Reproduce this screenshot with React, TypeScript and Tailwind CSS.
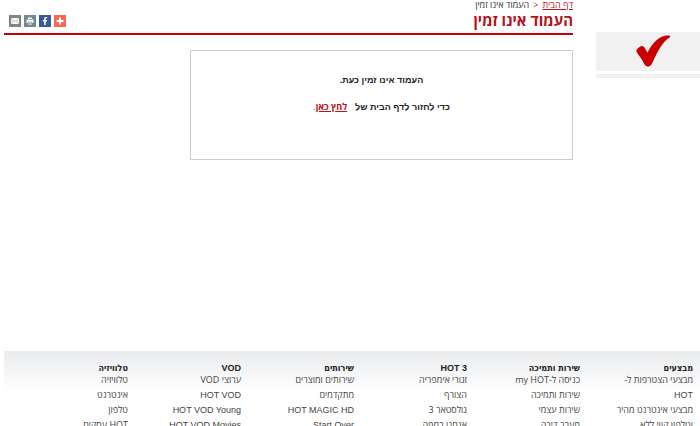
import { FaFacebookF } from 'react-icons/fa'

const columns = [
  { title: 'מבצעים', links: ['מבצעי הצטרפות ל-', 'HOT', 'מבצעי אינטרנט מהיר', 'וטלפון קווי ללא'] },
  { title: 'שירות ותמיכה', links: ['כניסה ל-my HOT', 'שירות ותמיכה', 'שירות עצמי', 'מעבר דירה'] },
  { title: 'HOT 3', links: ['זגורי אימפריה', 'הצורף', 'גולסטאר 3', 'אנחנו במפה'] },
  { title: 'שירותים', links: ['שירותים ומוצרים', 'מתקדמים', 'HOT MAGIC HD', 'Start Over'] },
  { title: 'VOD', links: ['ערוצי VOD', 'HOT VOD', 'HOT VOD Young', 'HOT VOD Movies'] },
  { title: 'טלוויזיה', links: ['טלוויזיה', 'אינטרנט', 'טלפון', 'HOT עסקים'] },
]

const isLatin = (text: string) => /^[ -~]+$/.test(text)

function ShareBar() {
  return (
    <div className="flex gap-[3px]">
      <button type="button" aria-label="שיתוף" className="flex size-3 items-center justify-center bg-[#fb6a50]">
        <svg viewBox="0 0 12 12" className="size-3" fill="#fff">
          <path d="M5 2.500h2V5h2.500v2H7v2.500H5V7H2.500V5H5z" />
        </svg>
      </button>
      <button type="button" aria-label="Facebook" className="flex size-3 items-center justify-center bg-[#3b5998] text-white">
        <FaFacebookF className="size-2" />
      </button>
      <button type="button" aria-label="הדפסה" className="flex size-3 items-center justify-center bg-[#738a8d]">
        <svg viewBox="0 0 12 12" className="size-3">
          <path d="M4 2.500h4v2h1.500v3.500H8v1.500H4V8H2.500V4.500H4z" fill="#fff" />
          <path d="M4 4.500h4M4.500 7h3v1.500h-3z" stroke="#738a8d" strokeWidth=".7" fill="none" />
        </svg>
      </button>
      <button type="button" aria-label="דואר אלקטרוני" className="flex size-3 items-center justify-center bg-[#848484]">
        <svg viewBox="0 0 12 12" className="size-3">
          <path d="M2 3h8v6H2z" fill="#fff" />
          <path d="M2 3.500l4 3 4-3M2 8.500l2.500-2.300M10 8.500L7.500 6.200" stroke="#848484" strokeWidth=".6" fill="none" />
        </svg>
      </button>
    </div>
  )
}

function Sidebar() {
  return (
    <aside className="flex w-[104px] shrink-0 flex-col gap-[3px] pt-8">
      <div className="flex h-[39px] justify-center bg-[#f1f1f1] pt-[3px] pl-[10px]">
        <svg viewBox="0 0 36 32" className="h-8 w-9" fill="#c80000">
          <path d="M1.500 16.500C1 14.500 4 11.500 7 11c2.200-.3 3.600 3.800 5.500 6.500C17 8.500 23.500 1.500 31 .5c2.500-.3 4.500 0 4.200 1.200-.2 1-1.800 1.300-3 2.300C26 9.500 22 18 18 26.500c-2 4.200-3 5.200-5.500 5-2.300-.2-3-2-4.500-5-2-4-5-6.500-6.500-10z" />
        </svg>
      </div>
      <div className="h-1 bg-[#f1f1f1]" />
    </aside>
  )
}

function Footer() {
  return (
    <footer className="ml-1 flex bg-linear-to-b from-[#e9ebec] to-white to-[40px] pt-[11px] pr-[7px] pl-[11px] text-[9px] leading-3">
      {columns.map((column) => (
        <div key={column.title} className="min-w-0 flex-1">
          <h2
            className={
              isLatin(column.title)
                ? "font-['Liberation_Sans',sans-serif] font-bold text-[#222]"
                : "font-['DejaVu_Sans_Condensed','Liberation_Sans',sans-serif] font-bold text-[#222]"
            }
          >
            {column.title}
          </h2>
          <ul>
            {column.links.map((link) => (
              <li key={link} className="h-[15px] whitespace-nowrap text-[#444]">
                <a href="#" className={isLatin(link) ? "font-['Liberation_Sans',sans-serif]" : ''}>
                  {link}
                </a>
              </li>
            ))}
          </ul>
        </div>
      ))}
    </footer>
  )
}

export default function App() {
  return (
    <div dir="rtl" className="bg-white font-['Open_Sans','Liberation_Sans',sans-serif]">
      <div className="flex min-h-[351px] gap-[23px]">
        <Sidebar />
        <main className="min-w-0 flex-1 pl-1">
          <header className="border-b-2 border-[#c80000] pb-1">
            <nav className="flex gap-1 pb-[2px] text-[9px] leading-[10px] text-[#333]">
              <a href="#" className="text-[#c01018] underline">דף הבית</a>
              <span className="text-[#c01018]">&lt;</span>
              <span>העמוד אינו זמין</span>
            </nav>
            <div className="flex items-center justify-between pl-[5px]">
              <h1 className="text-[15px] leading-[17px] font-bold text-[#b5121b]">העמוד אינו זמין</h1>
              <ShareBar />
            </div>
          </header>
          <section className="mt-[15px] h-[110px] w-[383px] border border-[#ccc] pt-[22px] text-center font-['Liberation_Sans',sans-serif] text-[9px] leading-[14px] font-bold text-[#222]">
            <p>העמוד אינו זמין כעת.</p>
            <p className="mt-[13px]">
              כדי לחזור לדף הבית של
              <a href="#" className="ms-2 font-['Open_Sans',sans-serif] text-[#c01018] underline">לחץ כאן</a>
              <span className="font-normal text-[#c01018]">.</span>
            </p>
          </section>
        </main>
      </div>
      <Footer />
    </div>
  )
}
